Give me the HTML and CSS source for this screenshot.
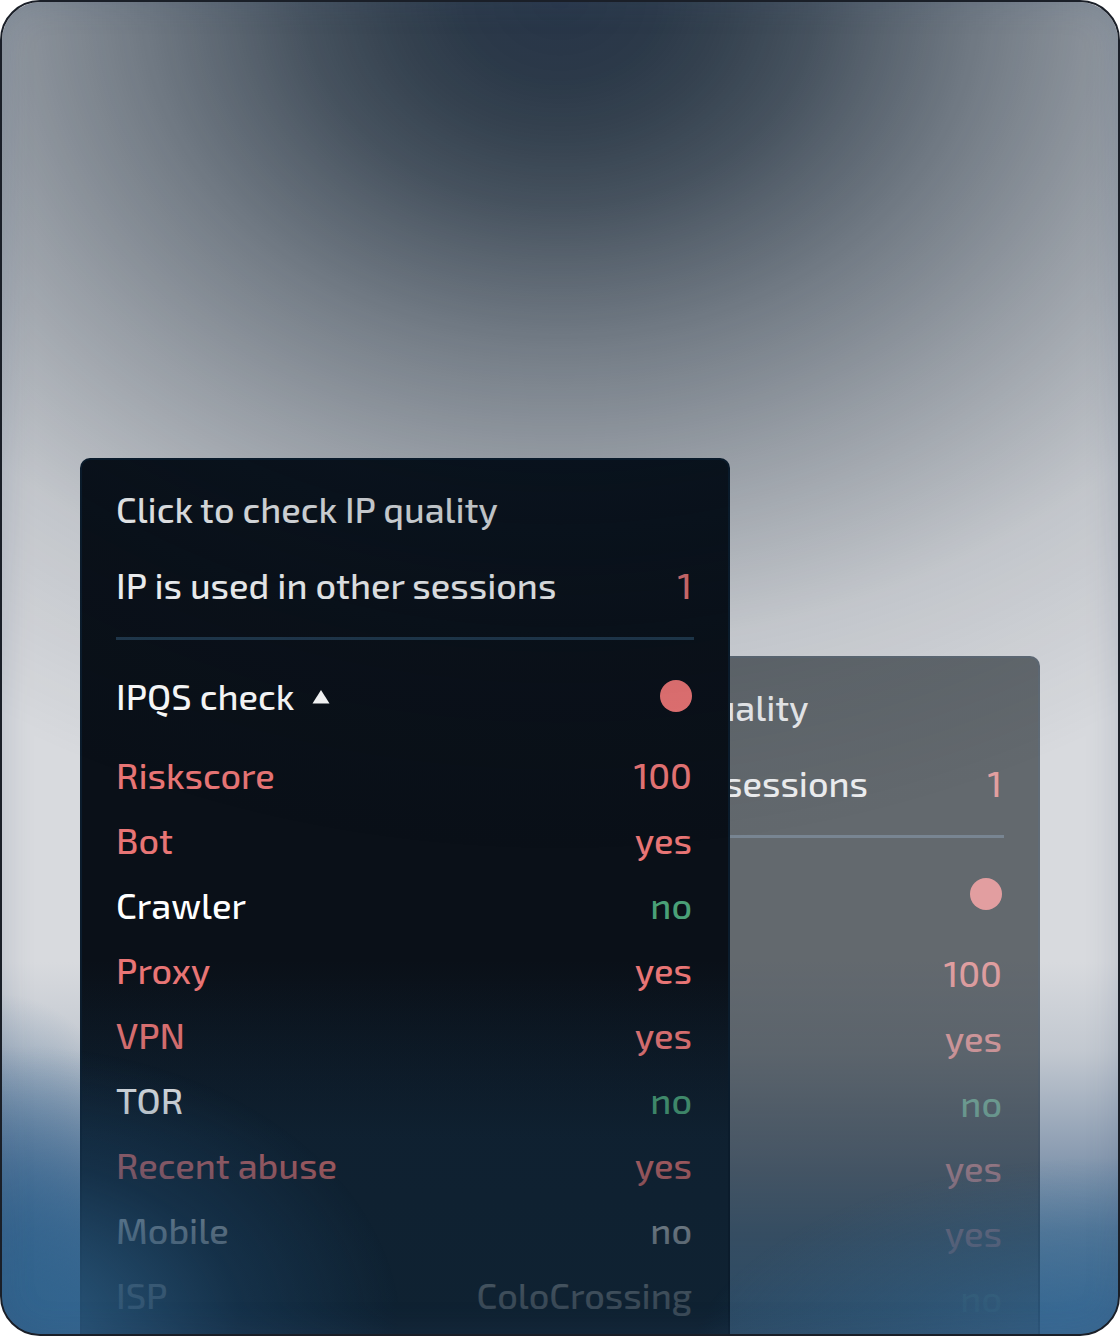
FILE: index.html
```html
<!DOCTYPE html>
<html lang="en">
<head>
  <meta charset="UTF-8">
  <meta name="viewport" content="width=device-width, initial-scale=1.0">
  <title>IP quality</title>
  <link rel="stylesheet" href="styles.css">
</head>
<body>
  <main class="scene">
    <section class="panel panel-front">
      <button type="button" class="row check-button">Click to check IP quality</button>
      <div class="row">
        <span>IP is used in other sessions</span>
        <span class="bad">1</span>
      </div>
      <hr class="divider">
      <div class="row check-row">
        <button type="button" class="toggle" aria-expanded="true">
          IPQS check
          <svg class="arrow" viewBox="0 0 18 16" aria-hidden="true"><path d="M9 2 17.5 15.5H0.5Z"/></svg>
        </button>
        <span class="dot"></span>
      </div>
      <dl class="results">
        <div class="result bad"><dt>Riskscore</dt><dd>100</dd></div>
        <div class="result bad"><dt>Bot</dt><dd>yes</dd></div>
        <div class="result"><dt>Crawler</dt><dd class="good">no</dd></div>
        <div class="result bad"><dt>Proxy</dt><dd>yes</dd></div>
        <div class="result bad"><dt>VPN</dt><dd>yes</dd></div>
        <div class="result"><dt>TOR</dt><dd class="good">no</dd></div>
        <div class="result bad"><dt>Recent abuse</dt><dd>yes</dd></div>
        <div class="result"><dt>Mobile</dt><dd>no</dd></div>
        <div class="result"><dt>ISP</dt><dd>ColoCrossing</dd></div>
      </dl>
    </section>

    <!-- second panel, mostly hidden behind the first one -->
    <section class="panel panel-back">
      <div class="row"><span class="title-tail">quality</span></div>
      <div class="row">
        <span class="sessions-tail">sessions</span>
        <span class="bad">1</span>
      </div>
      <hr class="divider">
      <div class="row check-row">
        <span class="dot"></span>
      </div>
      <ul class="results">
        <li class="result bad">100</li>
        <li class="result bad">yes</li>
        <li class="result good">no</li>
        <li class="result bad">yes</li>
        <li class="result bad">yes</li>
        <li class="result good">no</li>
      </ul>
    </section>
  </main>
</body>
</html>
```
FILE: styles.css
```css
* {
  box-sizing: border-box;
}
body {
  margin: 0;
  background: #fff;
  font-family: "Exo 2", "Noto Sans", sans-serif;
  font-size: 36px;
  font-weight: 500;
  line-height: 44px;
  color: #fff;
}
.scene {
  position: relative;
  display: grid;
  grid-template-columns: 31fr 34fr 31fr;
  grid-template-rows: 198px 1fr;
  height: 100vh;
  min-height: 1336px;
  padding: 456px 78px 0;
  border: 2px solid #1a1f28;
  border-radius: 40px;
  overflow: hidden;
  background:
    radial-gradient(180px 340px at 0 100%, rgba(52, 96, 138, 0.9) 10%, rgba(60, 104, 146, 0.6) 50%, rgba(70, 110, 150, 0) 100%),
    linear-gradient(#d8dade 960px, #c2c8d0 1050px, #8c9db2 1150px, #587a9a 1230px, #3a678f 1310px);
}
/* light and shade over the panels */
.scene::after {
  content: "";
  position: absolute;
  inset: 0;
  z-index: 3;
  pointer-events: none;
  border-radius: 38px;
  box-shadow: inset 0 0 32px rgba(60, 80, 120, 0.22);
  background:
    radial-gradient(400px 290px at 0 100%, rgba(48, 100, 142, 0.7) 20%, rgba(38, 90, 135, 0.28) 60%, rgba(38, 90, 135, 0) 100%),
    radial-gradient(440px 230px at 100% 104%, rgba(56, 108, 152, 0.6) 20%, rgba(50, 104, 146, 0.3) 60%, rgba(50, 104, 146, 0) 100%),
    radial-gradient(1060px 850px at 50% 0, rgba(8, 24, 45, 0.85) 0%, rgba(8, 24, 42, 0.83) 9%, rgba(8, 24, 40, 0.78) 16%, rgba(8, 24, 40, 0.7) 24%, rgba(8, 24, 40, 0.62) 30%, rgba(8, 24, 40, 0.48) 41%, rgba(8, 24, 40, 0.31) 56%, rgba(8, 24, 40, 0.1) 76%, rgba(8, 24, 40, 0) 100%);
}
.panel {
  position: relative;
  padding: 11px 34px 0;
  border: 2px solid #0b1c2c;
  border-bottom: 0;
  border-radius: 10px 10px 0 0;
}
.panel::after {
  content: "";
  position: absolute;
  inset: 0;
  pointer-events: none;
}
.panel-front {
  grid-area: 1 / 1 / 3 / 3;
  z-index: 2;
  background: linear-gradient(#0a1018 500px, #0f2030 680px);
}
.panel-front::after {
  background: linear-gradient(rgba(15, 34, 50, 0) 520px, rgba(15, 34, 50, 0.1) 580px, rgba(15, 34, 50, 0.2) 645px, rgba(15, 34, 50, 0.38) 710px, rgba(15, 34, 50, 0.66) 775px, rgba(15, 34, 50, 0.82) 840px);
}
.panel-back {
  grid-area: 2 / 2 / 3 / 4;
  z-index: 1;
  opacity: 0.58;
  background: #0f181f;
}
.panel-back::after {
  background: linear-gradient(rgba(38, 58, 74, 0) 300px, rgba(38, 58, 74, 0.12) 384px, rgba(38, 58, 74, 0.25) 449px, rgba(38, 58, 74, 0.42) 514px, rgba(38, 58, 74, 0.66) 580px, rgba(38, 58, 74, 0.9) 645px);
}
.row {
  display: flex;
  align-items: center;
  justify-content: space-between;
  height: 76px;
}
button {
  padding: 0;
  border: 0;
  background: none;
  font: inherit;
  color: inherit;
  cursor: pointer;
}
.check-button {
  width: 100%;
}
.divider {
  height: 3px;
  margin: 14px 0 24px;
  border: 0;
  background: #20384c;
}
.panel-back .divider {
  background: #34485c;
}
.check-row {
  height: 64px;
}
.toggle {
  display: flex;
  align-items: center;
  gap: 18px;
}
.arrow {
  width: 18px;
  height: 16px;
  fill: currentColor;
}
.dot {
  width: 32px;
  height: 32px;
  margin-left: auto;
  border-radius: 50%;
  background: #ea7474;
}
.results {
  margin: 14px 0 0;
  padding: 0;
  list-style: none;
}
.result {
  display: flex;
  align-items: center;
  justify-content: space-between;
  height: 65px;
}
.row,
.result {
  padding-right: 2px;
}
.panel-back .result {
  justify-content: flex-end;
}
.result dd {
  margin: 0;
}
.title-tail {
  padding-left: 268px;
}
.sessions-tail {
  padding-left: 298px;
}
.bad {
  color: #e87575;
}
.good {
  color: #4aa077;
}
```
